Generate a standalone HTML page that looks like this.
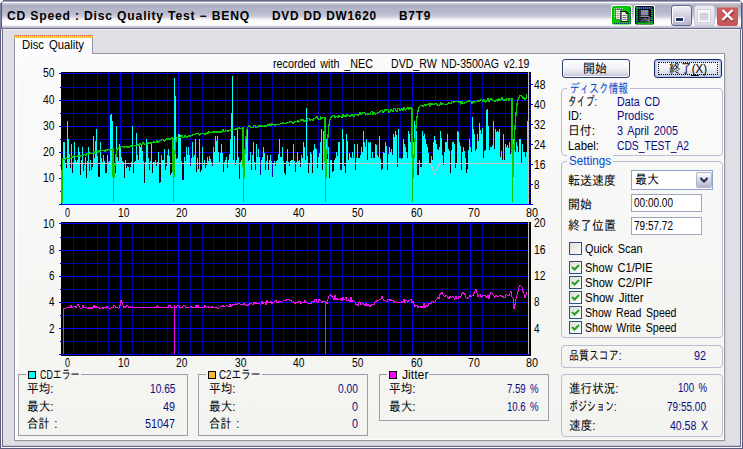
<!DOCTYPE html><html><head><meta charset="utf-8"><title>CD Speed : Disc Quality Test</title><style>
html,body{margin:0;padding:0}
body{width:743px;height:449px;position:relative;overflow:hidden;background:#e0dfe6;font-family:"Liberation Sans","IPAGothic",sans-serif;font-size:12px}
div,span,svg{position:absolute;box-sizing:border-box}
.t{word-spacing:2px;white-space:nowrap;line-height:20px;height:20px;transform-origin:0 50%;display:block}
#tb{left:0;top:0;width:743px;height:29px;background:linear-gradient(#6a6a88 0,#6a6a88 1px,#9c9cb6 1px,#9c9cb6 2px,#fcfcff 2px,#fcfcff 3px,#d2d2e0 3px,#c0c0d2 4px,#b4b4c8 5px,#b4b4c8 6px,#a6acb4 6px,#a6acb4 7px,#b4b4c8 7px,#b6b6ca 11px,#bebed2 14px,#cacadb 16px,#dcdce6 18px,#f4f4f6 19px,#fdfdfd 22px,#fff 25px,#e0e0ea 26px,#c0c0d4 27px,#b4b4ca 28px,#6c6c8c 28px,#6c6c8c 29px)}
#bl0{left:0;top:29px;width:1px;height:420px;background:#5c5c7c}
#bl1{left:1px;top:29px;width:1px;height:419px;background:#f4f4fa}
#bl2{left:2px;top:29px;width:1px;height:418px;background:#6c6c8c}
#br0{left:742px;top:29px;width:1px;height:420px;background:#5c5c7c}
#br1{left:741px;top:29px;width:1px;height:419px;background:#f4f4fa}
#br2{left:740px;top:29px;width:1px;height:418px;background:#6c6c8c}
#bb0{left:0;top:448px;width:743px;height:1px;background:#5c5c7c}
#bb1{left:1px;top:447px;width:741px;height:1px;background:#f4f4fa}
#bb2{left:2px;top:446px;width:739px;height:1px;background:#6c6c8c}
#bb3{left:3px;top:445px;width:737px;height:1px;background:#c4c4d4}
.cnr{width:4px;height:4px;top:0;background:#fff}
#tab{left:14px;top:35px;width:79px;height:19px;background:#fcfcfe;border:1px solid #9496a4;border-bottom:none;border-top:none}
#tabtop{left:14px;top:35px;width:79px;height:3px;background:#ffc73c;border-radius:2px 2px 0 0;border-top:1px dotted #e0503c}
#panel{left:14px;top:53px;width:711px;height:388px;background:#fcfcfe;border:1px solid #9496a4;box-shadow:1px 1px 0 #d4d4d0,2px 2px 0 #dcdcda}
#page{left:18px;top:56px;width:705px;height:383px;background:linear-gradient(#fafafa,#f3f3ef)}
.gb{border:1px solid #bcbcd4;border-radius:4px}
.gs{border:1px solid #9c9cac}
.cap{background:#f6f6f3;height:12px}
.btn{border:1px solid #2c3c6c;border-radius:3px;background:linear-gradient(#fefefe 0,#f4f4f8 45%,#dcdce8 80%,#b8b8d0 100%);box-shadow:inset 0 0 0 1px #fff}
.inp{background:#fff;border:1px solid #a0a4c0}
.cb{width:13px;height:13px;border:1px solid #2c5088;background:linear-gradient(135deg,#dcdcd8,#fff)}
.sq{width:8px;height:8px;border:1px solid #000}
.ls{letter-spacing:0.8px;word-spacing:0}
.tl{top:3px;width:1px;height:26px}
#hl{left:3px;top:29px;width:737px;height:1px;background:#f0f0f5}

</style></head><body>
<div id="tb"></div>
<svg style="left:0;top:0" width="4" height="4" shape-rendering="crispEdges"><path d="M0 0h3v1h-3zM0 1h2v1h-2zM0 2h1v1h-1z" fill="#fff"/><path d="M2 1h1v1h-1zM1 2h1v1h-1z" fill="#6a6a88"/></svg>
<svg style="left:739px;top:0" width="4" height="4" shape-rendering="crispEdges"><path d="M1 0h3v1h-3zM2 1h2v1h-2zM3 2h1v1h-1z" fill="#fff"/><path d="M1 1h1v1h-1zM2 2h1v1h-1z" fill="#6a6a88"/></svg>
<div class="tl" style="left:0;background:#8484a4"></div><div class="tl" style="left:1px;background:#5a5a7a"></div><div class="tl" style="left:742px;background:#8484a4"></div><div class="tl" style="left:741px;background:#5a5a7a"></div><div id="hl"></div>
<div id="bl0"></div><div id="bl1"></div><div id="bl2"></div>
<div id="br0"></div><div id="br1"></div><div id="br2"></div>
<div id="bb3"></div><div id="bb2"></div><div id="bb1"></div><div id="bb0"></div>
<!-- title bar icons -->
<svg style="left:611px;top:5px" width="21" height="21" viewBox="0 0 21 21">
 <rect x="0" y="0" width="21" height="20.5" rx="2.5" fill="#fff"/>
 <rect x="1" y="1" width="19" height="18.5" rx="1.5" fill="#00c400"/>
 <path d="M3 18.5H19.5M19.5 3V18.5" fill="none" stroke="#102878" stroke-width="1" stroke-dasharray="1 1"/>
 <path d="M3 3.5h10M3.5 3v9" fill="none" stroke="#b8e0a8" stroke-width="1" stroke-dasharray="1 1"/>
 <rect x="4.5" y="4.5" width="5" height="10" fill="#f0ecd0" stroke="#506080" stroke-width="0.8"/>
 <path d="M5.5 6.5h3M5.5 8.5h3M5.5 10.5h3M5.5 12.5h3" stroke="#9098a8" stroke-width="0.9"/>
 <path d="M10 6.5h5l2 2v8h-7z" fill="#f4f0dc" stroke="#181818" stroke-width="1.1"/>
 <path d="M15 6.5v2h2" fill="none" stroke="#181818" stroke-width="1"/>
 <path d="M11.5 10.5h4M11.5 12.5h4M11.5 14.5h4" stroke="#6878a0" stroke-width="1"/>
</svg>
<svg style="left:634px;top:5px" width="21" height="21" viewBox="0 0 21 21">
 <rect x="0" y="0" width="21" height="20.5" rx="2.5" fill="#fff"/>
 <rect x="1" y="1" width="19" height="18.5" rx="1.5" fill="#060806"/>
 <rect x="3" y="3" width="15" height="14.5" fill="none" stroke="#00c000" stroke-width="2" stroke-dasharray="1 1"/>
 <rect x="3" y="3" width="15" height="14.5" fill="none" stroke="#1040a0" stroke-width="2" stroke-dasharray="1 1" stroke-dashoffset="1" opacity=".8"/>
 <rect x="4" y="4" width="13" height="12.5" fill="#060806"/>
 <path d="M4 18.5h15" stroke="#00c000" stroke-width="1.5"/>
 <rect x="7" y="5" width="7.5" height="5.5" fill="#8888a8"/>
 <path d="M6 5v11h4" fill="none" stroke="#505068" stroke-width="1"/>
 <path d="M6.5 11.5h9" stroke="#9090a8" stroke-width="1"/>
 <rect x="7.500" y="13" width="5" height="3.500" fill="#48485c"/>
 <path d="M11 13l6 4M12 17l5-4M15 12v6" stroke="#9898b0" stroke-width="0.9"/>
</svg>
<!-- min -->
<div style="left:671px;top:5px;width:21px;height:21px;border:1px solid #5c6488;border-radius:3px;background:linear-gradient(#f0f0f8,#d4d4e4 45%,#b4b4cc);box-shadow:inset 1px 1px 0 #fff"></div>
<div style="left:675px;top:17px;width:9px;height:5px;background:#fff"></div>
<div style="left:676px;top:18px;width:7px;height:3px;background:#1c2c5c"></div>
<!-- max (disabled) -->
<div style="left:694px;top:5px;width:21px;height:21px;border:1px solid #c8c8d8;border-radius:3px;background:linear-gradient(#ececf2,#dcdce6)"></div>
<div style="left:698px;top:10px;width:12px;height:12px;border:1px solid #fafafc;border-top-width:2px;background:#d2d2de;box-shadow:0 0 0 1px #d0d0dc,inset 0 0 0 1px #ececf2"></div>
<!-- close -->
<div style="left:717px;top:5px;width:21px;height:21px;border-radius:3px;background:linear-gradient(#c0b8b4 0,#c0b8b4 2px,#cc5a5e 3px,#c8565a 100%)"></div>
<svg style="left:717px;top:4px" width="21" height="21" viewBox="0 0 21 21"><path d="M5.5 6.5l10 10M15.5 6.5l-10 10" stroke="#5a2020" stroke-width="3" opacity=".5" transform="translate(.7 .7)"/><path d="M5.5 6l10 10M15.5 6l-10 10" stroke="#fff" stroke-width="2.4"/></svg>

<!-- tab + panel -->
<div id="panel"></div>
<div id="page"></div>
<div id="tab"></div><div id="tabtop"></div>

<svg style="left:0;top:0" width="743" height="449" viewBox="0 0 743 449"><g shape-rendering="crispEdges"><rect x="61" y="72" width="470" height="133" fill="#000"/><rect x="73" y="72" width="1" height="133" fill="#0000a4"/><rect x="85" y="72" width="1" height="133" fill="#0000a4"/><rect x="97" y="72" width="1" height="133" fill="#0000a4"/><rect x="108" y="72" width="1" height="133" fill="#0000a4"/><rect x="120" y="72" width="1" height="133" fill="#0000e8"/><rect x="132" y="72" width="1" height="133" fill="#0000a4"/><rect x="143" y="72" width="1" height="133" fill="#0000a4"/><rect x="155" y="72" width="1" height="133" fill="#0000a4"/><rect x="167" y="72" width="1" height="133" fill="#0000a4"/><rect x="178" y="72" width="1" height="133" fill="#0000e8"/><rect x="190" y="72" width="1" height="133" fill="#0000a4"/><rect x="202" y="72" width="1" height="133" fill="#0000a4"/><rect x="213" y="72" width="1" height="133" fill="#0000a4"/><rect x="225" y="72" width="1" height="133" fill="#0000a4"/><rect x="237" y="72" width="1" height="133" fill="#0000e8"/><rect x="248" y="72" width="1" height="133" fill="#0000a4"/><rect x="260" y="72" width="1" height="133" fill="#0000a4"/><rect x="272" y="72" width="1" height="133" fill="#0000a4"/><rect x="283" y="72" width="1" height="133" fill="#0000a4"/><rect x="295" y="72" width="1" height="133" fill="#0000e8"/><rect x="307" y="72" width="1" height="133" fill="#0000a4"/><rect x="318" y="72" width="1" height="133" fill="#0000a4"/><rect x="330" y="72" width="1" height="133" fill="#0000a4"/><rect x="342" y="72" width="1" height="133" fill="#0000a4"/><rect x="353" y="72" width="1" height="133" fill="#0000e8"/><rect x="365" y="72" width="1" height="133" fill="#0000a4"/><rect x="377" y="72" width="1" height="133" fill="#0000a4"/><rect x="388" y="72" width="1" height="133" fill="#0000a4"/><rect x="400" y="72" width="1" height="133" fill="#0000a4"/><rect x="412" y="72" width="1" height="133" fill="#0000e8"/><rect x="423" y="72" width="1" height="133" fill="#0000a4"/><rect x="435" y="72" width="1" height="133" fill="#0000a4"/><rect x="447" y="72" width="1" height="133" fill="#0000a4"/><rect x="458" y="72" width="1" height="133" fill="#0000a4"/><rect x="470" y="72" width="1" height="133" fill="#0000e8"/><rect x="482" y="72" width="1" height="133" fill="#0000a4"/><rect x="493" y="72" width="1" height="133" fill="#0000a4"/><rect x="505" y="72" width="1" height="133" fill="#0000a4"/><rect x="517" y="72" width="1" height="133" fill="#0000a4"/><rect x="60" y="87" width="470" height="1" fill="#0000a4"/><rect x="60" y="113" width="470" height="1" fill="#0000a4"/><rect x="60" y="139" width="470" height="1" fill="#0000a4"/><rect x="60" y="165" width="470" height="1" fill="#0000a4"/><rect x="60" y="191" width="470" height="1" fill="#0000a4"/><rect x="59" y="73" width="471" height="1" fill="#0000ff"/><rect x="59" y="100" width="471" height="1" fill="#0000ff"/><rect x="59" y="126" width="471" height="1" fill="#0000ff"/><rect x="59" y="152" width="471" height="1" fill="#0000ff"/><rect x="59" y="178" width="471" height="1" fill="#0000ff"/><rect x="59" y="204" width="471" height="1" fill="#0000ff"/><path d="M62 160h1V205h-1zM63 142h1V205h-1zM64 142h1V205h-1zM65 164h1V205h-1zM66 168h1V205h-1zM67 121h1V205h-1zM68 139h1V205h-1zM69 154h1V205h-1zM70 168h1V205h-1zM71 144h1V205h-1zM72 173h1V205h-1zM73 162h1V205h-1zM74 142h1V205h-1zM75 160h1V205h-1zM76 162h1V205h-1zM77 160h1V205h-1zM78 147h1V205h-1zM79 152h1V205h-1zM80 175h1V205h-1zM81 160h1V205h-1zM82 147h1V205h-1zM83 171h1V205h-1zM84 165h1V205h-1zM85 157h1V205h-1zM86 178h1V205h-1zM87 161h1V205h-1zM88 147h1V205h-1zM89 171h1V205h-1zM90 160h1V205h-1zM91 170h1V205h-1zM92 167h1V205h-1zM93 136h1V205h-1zM94 158h1V205h-1zM95 141h1V205h-1zM96 129h1V205h-1zM97 156h1V205h-1zM98 177h1V205h-1zM99 177h1V205h-1zM100 142h1V205h-1zM101 158h1V205h-1zM102 162h1V205h-1zM103 155h1V205h-1zM104 161h1V205h-1zM105 173h1V205h-1zM106 173h1V205h-1zM107 155h1V205h-1zM108 162h1V205h-1zM109 161h1V205h-1zM110 115h1V205h-1zM111 114h1V205h-1zM112 121h1V205h-1zM113 159h1V205h-1zM114 175h1V205h-1zM115 173h1V205h-1zM116 126h1V205h-1zM117 157h1V205h-1zM118 161h1V205h-1zM119 144h1V205h-1zM120 146h1V205h-1zM121 157h1V205h-1zM122 161h1V205h-1zM123 162h1V205h-1zM124 178h1V205h-1zM125 160h1V205h-1zM126 168h1V205h-1zM127 166h1V205h-1zM128 167h1V205h-1zM129 171h1V205h-1zM130 167h1V205h-1zM131 162h1V205h-1zM132 126h1V205h-1zM133 173h1V205h-1zM134 162h1V205h-1zM135 161h1V205h-1zM136 133h1V205h-1zM137 155h1V205h-1zM138 160h1V205h-1zM139 144h1V205h-1zM140 147h1V205h-1zM141 144h1V205h-1zM142 151h1V205h-1zM143 161h1V205h-1zM144 183h1V205h-1zM145 162h1V205h-1zM146 139h1V205h-1zM147 145h1V205h-1zM148 158h1V205h-1zM149 170h1V205h-1zM150 161h1V205h-1zM151 144h1V205h-1zM152 173h1V205h-1zM153 162h1V205h-1zM154 162h1V205h-1zM155 160h1V205h-1zM156 166h1V205h-1zM157 162h1V205h-1zM158 152h1V205h-1zM159 183h1V205h-1zM160 182h1V205h-1zM161 155h1V205h-1zM162 160h1V205h-1zM163 160h1V205h-1zM164 149h1V205h-1zM165 170h1V205h-1zM166 166h1V205h-1zM167 155h1V205h-1zM168 149h1V205h-1zM169 156h1V205h-1zM170 175h1V205h-1zM171 173h1V205h-1zM172 166h1V205h-1zM173 161h1V205h-1zM174 78h1V205h-1zM175 96h1V205h-1zM176 159h1V205h-1zM177 158h1V205h-1zM178 134h1V205h-1zM179 134h1V205h-1zM180 135h1V205h-1zM181 161h1V205h-1zM182 180h1V205h-1zM183 180h1V205h-1zM184 157h1V205h-1zM185 161h1V205h-1zM186 147h1V205h-1zM187 155h1V205h-1zM188 147h1V205h-1zM189 155h1V205h-1zM190 166h1V205h-1zM191 158h1V205h-1zM192 142h1V205h-1zM193 157h1V205h-1zM194 155h1V205h-1zM195 139h1V205h-1zM196 172h1V205h-1zM197 158h1V205h-1zM198 169h1V205h-1zM199 139h1V205h-1zM200 172h1V205h-1zM201 170h1V205h-1zM202 147h1V205h-1zM203 165h1V205h-1zM204 160h1V205h-1zM205 168h1V205h-1zM206 165h1V205h-1zM207 157h1V205h-1zM208 161h1V205h-1zM209 156h1V205h-1zM210 159h1V205h-1zM211 162h1V205h-1zM212 166h1V205h-1zM213 147h1V205h-1zM214 152h1V205h-1zM215 136h1V205h-1zM216 141h1V205h-1zM217 136h1V205h-1zM218 152h1V205h-1zM219 162h1V205h-1zM220 153h1V205h-1zM221 144h1V205h-1zM222 153h1V205h-1zM223 172h1V205h-1zM224 162h1V205h-1zM225 160h1V205h-1zM226 157h1V205h-1zM227 168h1V205h-1zM228 160h1V205h-1zM229 154h1V205h-1zM230 139h1V205h-1zM231 113h1V205h-1zM232 76h1V205h-1zM233 160h1V205h-1zM234 136h1V205h-1zM235 165h1V205h-1zM236 160h1V205h-1zM237 129h1V205h-1zM238 157h1V205h-1zM239 179h1V205h-1zM240 162h1V205h-1zM241 160h1V205h-1zM242 160h1V205h-1zM243 156h1V205h-1zM244 149h1V205h-1zM245 154h1V205h-1zM246 139h1V205h-1zM247 129h1V205h-1zM248 161h1V205h-1zM249 160h1V205h-1zM250 152h1V205h-1zM251 170h1V205h-1zM252 155h1V205h-1zM253 142h1V205h-1zM254 162h1V205h-1zM255 170h1V205h-1zM256 144h1V205h-1zM257 157h1V205h-1zM258 149h1V205h-1zM259 157h1V205h-1zM260 175h1V205h-1zM261 160h1V205h-1zM262 157h1V205h-1zM263 147h1V205h-1zM264 153h1V205h-1zM265 170h1V205h-1zM266 161h1V205h-1zM267 155h1V205h-1zM268 170h1V205h-1zM269 160h1V205h-1zM270 155h1V205h-1zM271 161h1V205h-1zM272 177h1V205h-1zM273 164h1V205h-1zM274 161h1V205h-1zM275 166h1V205h-1zM276 161h1V205h-1zM277 160h1V205h-1zM278 154h1V205h-1zM279 139h1V205h-1zM280 157h1V205h-1zM281 157h1V205h-1zM282 147h1V205h-1zM283 161h1V205h-1zM284 173h1V205h-1zM285 175h1V205h-1zM286 161h1V205h-1zM287 149h1V205h-1zM288 162h1V205h-1zM289 166h1V205h-1zM290 161h1V205h-1zM291 160h1V205h-1zM292 160h1V205h-1zM293 144h1V205h-1zM294 161h1V205h-1zM295 172h1V205h-1zM296 162h1V205h-1zM297 152h1V205h-1zM298 161h1V205h-1zM299 160h1V205h-1zM300 167h1V205h-1zM301 155h1V205h-1zM302 158h1V205h-1zM303 142h1V205h-1zM304 147h1V205h-1zM305 160h1V205h-1zM306 108h1V205h-1zM307 156h1V205h-1zM308 173h1V205h-1zM309 164h1V205h-1zM310 152h1V205h-1zM311 154h1V205h-1zM312 173h1V205h-1zM313 150h1V205h-1zM314 144h1V205h-1zM315 148h1V205h-1zM316 149h1V205h-1zM317 168h1V205h-1zM318 157h1V205h-1zM319 153h1V205h-1zM320 142h1V205h-1zM321 129h1V205h-1zM322 170h1V205h-1zM323 131h1V205h-1zM324 160h1V205h-1zM325 160h1V205h-1zM326 139h1V205h-1zM327 159h1V205h-1zM328 147h1V205h-1zM329 178h1V205h-1zM330 160h1V205h-1zM331 160h1V205h-1zM332 172h1V205h-1zM333 171h1V205h-1zM334 160h1V205h-1zM335 158h1V205h-1zM336 152h1V205h-1zM337 156h1V205h-1zM338 142h1V205h-1zM339 142h1V205h-1zM340 170h1V205h-1zM341 170h1V205h-1zM342 129h1V205h-1zM343 139h1V205h-1zM344 166h1V205h-1zM345 173h1V205h-1zM346 134h1V205h-1zM347 141h1V205h-1zM348 160h1V205h-1zM349 153h1V205h-1zM350 157h1V205h-1zM351 158h1V205h-1zM352 152h1V205h-1zM353 158h1V205h-1zM354 144h1V205h-1zM355 170h1V205h-1zM356 158h1V205h-1zM357 144h1V205h-1zM358 158h1V205h-1zM359 158h1V205h-1zM360 155h1V205h-1zM361 147h1V205h-1zM362 152h1V205h-1zM363 131h1V205h-1zM364 142h1V205h-1zM365 147h1V205h-1zM366 139h1V205h-1zM367 160h1V205h-1zM368 142h1V205h-1zM369 143h1V205h-1zM370 142h1V205h-1zM371 158h1V205h-1zM372 152h1V205h-1zM373 158h1V205h-1zM374 158h1V205h-1zM375 144h1V205h-1zM376 145h1V205h-1zM377 155h1V205h-1zM378 157h1V205h-1zM379 136h1V205h-1zM380 159h1V205h-1zM381 170h1V205h-1zM382 169h1V205h-1zM383 152h1V205h-1zM384 153h1V205h-1zM385 142h1V205h-1zM386 146h1V205h-1zM387 170h1V205h-1zM388 154h1V205h-1zM389 147h1V205h-1zM390 152h1V205h-1zM391 149h1V205h-1zM392 155h1V205h-1zM393 134h1V205h-1zM394 137h1V205h-1zM395 131h1V205h-1zM396 135h1V205h-1zM397 167h1V205h-1zM398 129h1V205h-1zM399 158h1V205h-1zM400 158h1V205h-1zM401 159h1V205h-1zM402 158h1V205h-1zM403 139h1V205h-1zM404 144h1V205h-1zM405 147h1V205h-1zM406 152h1V205h-1zM407 158h1V205h-1zM408 131h1V205h-1zM409 134h1V205h-1zM410 142h1V205h-1zM411 153h1V205h-1zM412 156h1V205h-1zM413 142h1V205h-1zM414 121h1V205h-1zM415 131h1V205h-1zM416 131h1V205h-1zM417 175h1V205h-1zM418 175h1V205h-1zM419 160h1V205h-1zM420 167h1V205h-1zM421 167h1V205h-1zM422 131h1V205h-1zM423 136h1V205h-1zM424 134h1V205h-1zM425 139h1V205h-1zM426 144h1V205h-1zM427 147h1V205h-1zM428 153h1V205h-1zM429 164h1V205h-1zM430 163h1V205h-1zM431 156h1V205h-1zM432 160h1V205h-1zM433 142h1V205h-1zM434 136h1V205h-1zM435 140h1V205h-1zM436 144h1V205h-1zM437 149h1V205h-1zM438 150h1V205h-1zM439 147h1V205h-1zM440 131h1V205h-1zM441 138h1V205h-1zM442 155h1V205h-1zM443 165h1V205h-1zM444 152h1V205h-1zM445 142h1V205h-1zM446 142h1V205h-1zM447 134h1V205h-1zM448 149h1V205h-1zM449 151h1V205h-1zM450 173h1V205h-1zM451 150h1V205h-1zM452 142h1V205h-1zM453 142h1V205h-1zM454 144h1V205h-1zM455 168h1V205h-1zM456 164h1V205h-1zM457 131h1V205h-1zM458 132h1V205h-1zM459 142h1V205h-1zM460 146h1V205h-1zM461 170h1V205h-1zM462 152h1V205h-1zM463 147h1V205h-1zM464 151h1V205h-1zM465 158h1V205h-1zM466 173h1V205h-1zM467 169h1V205h-1zM468 150h1V205h-1zM469 139h1V205h-1zM470 147h1V205h-1zM471 152h1V205h-1zM472 117h1V205h-1zM473 129h1V205h-1zM474 134h1V205h-1zM475 151h1V205h-1zM476 149h1V205h-1zM477 134h1V205h-1zM478 141h1V205h-1zM479 123h1V205h-1zM480 130h1V205h-1zM481 134h1V205h-1zM482 128h1V205h-1zM483 158h1V205h-1zM484 151h1V205h-1zM485 150h1V205h-1zM486 110h1V205h-1zM487 109h1V205h-1zM488 126h1V205h-1zM489 150h1V205h-1zM490 147h1V205h-1zM491 147h1V205h-1zM492 145h1V205h-1zM493 121h1V205h-1zM494 149h1V205h-1zM495 129h1V205h-1zM496 132h1V205h-1zM497 131h1V205h-1zM498 132h1V205h-1zM499 129h1V205h-1zM500 157h1V205h-1zM501 151h1V205h-1zM502 160h1V205h-1zM503 134h1V205h-1zM504 160h1V205h-1zM505 144h1V205h-1zM506 147h1V205h-1zM507 145h1V205h-1zM508 148h1V205h-1zM509 142h1V205h-1zM510 154h1V205h-1zM511 150h1V205h-1zM512 151h1V205h-1zM513 139h1V205h-1zM514 146h1V205h-1zM515 152h1V205h-1zM516 142h1V205h-1zM517 146h1V205h-1zM518 152h1V205h-1zM519 139h1V205h-1zM520 139h1V205h-1zM521 164h1V205h-1zM522 144h1V205h-1zM523 152h1V205h-1zM524 152h1V205h-1zM525 157h1V205h-1zM526 152h1V205h-1zM527 121h1V205h-1z" fill="#00ffff"/></g><polyline points="65.0,163.5 430.5,163.5 434.5,174.0 439.5,163.5 522.0,163.5" fill="none" stroke="#c8c8c8" stroke-width="1" stroke-linejoin="round" shape-rendering="crispEdges"/><polyline points="62.0,203.0 62.0,175.0 62.5,161.0 63.0,158.7 64.0,159.7 65.0,159.4 66.0,158.0 67.0,158.4 68.0,158.8 69.0,158.0 70.0,158.8 71.0,158.1 72.0,156.3 73.0,157.7 74.0,155.9 75.0,156.7 76.0,156.5 77.0,156.8 78.0,155.4 79.0,155.2 80.0,156.6 81.0,155.4 82.0,155.8 83.0,155.5 84.0,154.7 85.0,154.5 86.0,155.3 87.0,153.5 88.0,153.2 89.0,154.6 90.0,152.8 91.0,153.8 92.0,153.0 93.0,153.8 94.0,151.5 95.0,153.3 96.0,151.1 97.0,151.3 98.0,152.3 99.0,150.5 100.0,151.2 101.0,150.0 102.0,150.8 103.0,150.6 104.0,151.0 105.0,151.2 106.0,149.9 107.0,150.7 108.0,149.5 109.0,149.4 110.0,150.2 111.0,149.7 112.0,149.0 113.0,148.8 113.3,201.0 114.0,172.0 115.0,165.3 116.0,155.2 117.0,149.7 118.0,148.1 119.0,147.4 120.0,147.8 121.0,146.7 122.0,146.5 123.0,146.7 124.0,147.1 125.0,146.4 126.0,146.8 127.0,147.6 128.0,146.4 129.0,147.3 130.0,146.1 131.0,145.9 132.0,146.4 133.0,145.6 134.0,146.0 135.0,145.2 136.0,145.7 137.0,145.5 138.0,144.7 139.0,145.2 140.0,143.8 141.0,144.2 142.0,145.0 143.0,142.9 144.0,143.7 145.0,144.1 146.0,144.3 147.0,144.2 148.0,142.4 149.0,143.8 150.0,142.7 151.0,143.1 152.0,142.9 153.0,142.7 154.0,141.0 155.0,142.8 156.0,142.6 157.0,140.9 158.0,142.3 159.0,141.7 160.0,140.9 161.0,140.8 162.0,139.6 163.0,139.4 164.0,140.2 165.0,141.1 166.0,139.9 167.0,138.7 168.0,139.6 169.0,138.4 170.0,139.2 171.0,138.4 172.0,137.9 173.0,138.7 173.3,201.0 174.0,171.3 175.0,151.5 176.0,140.7 177.0,137.7 178.0,137.5 179.0,137.4 180.0,137.2 181.0,136.1 182.0,135.9 183.0,137.4 184.0,137.2 185.0,135.5 186.0,136.3 187.0,137.2 188.0,136.6 189.0,135.9 190.0,136.3 191.0,135.6 192.0,136.0 193.0,134.7 194.0,134.1 195.0,135.0 196.0,133.8 197.0,133.7 198.0,133.5 199.0,135.0 200.0,134.8 201.0,133.1 202.0,133.3 203.0,133.8 204.0,133.6 205.0,134.1 206.0,133.3 207.0,132.6 208.0,134.0 209.0,131.9 210.0,132.8 211.0,132.6 212.0,132.5 213.0,131.7 214.0,132.2 215.0,132.0 216.0,131.9 217.0,132.3 218.0,131.6 219.0,132.4 220.0,131.9 221.0,132.1 222.0,131.6 223.0,129.8 224.0,131.3 225.0,131.1 226.0,130.4 227.0,130.2 228.0,131.1 229.0,130.9 230.0,130.8 231.0,129.0 232.0,129.5 233.0,129.3 234.0,129.2 235.0,129.6 236.0,128.9 237.0,129.3 238.0,128.6 239.0,127.4 240.0,128.3 241.0,128.7 242.0,128.0 243.0,127.8 243.3,201.0 244.0,172.0 245.0,151.1 246.0,136.9 247.0,129.1 248.0,127.0 249.0,125.9 250.0,126.8 251.0,127.3 252.0,127.2 253.0,127.5 254.0,125.8 255.0,125.3 256.0,127.2 257.0,127.2 258.0,126.1 259.0,126.0 260.0,125.9 261.0,126.8 262.0,125.7 263.0,126.2 264.0,126.5 265.0,125.4 266.0,126.3 267.0,125.2 268.0,124.1 269.0,125.6 270.0,123.9 271.0,125.8 272.0,123.8 273.0,124.7 274.0,124.6 275.0,125.5 276.0,124.4 277.0,124.3 278.0,124.8 279.0,124.7 280.0,124.0 281.0,123.2 282.0,123.7 283.0,122.9 284.0,123.4 285.0,123.2 286.0,123.7 287.0,122.9 288.0,122.8 289.0,122.6 290.0,121.5 291.0,121.3 292.0,122.8 293.0,123.0 294.0,122.9 295.0,121.1 296.0,121.6 297.0,122.0 298.0,120.7 299.0,122.1 300.0,121.0 301.0,119.9 302.0,120.7 303.0,119.6 304.0,121.9 305.0,120.2 306.0,121.6 307.0,121.4 308.0,118.3 309.0,118.1 310.0,120.4 311.0,119.3 312.0,119.2 313.0,120.5 314.0,118.0 315.0,118.7 316.0,117.7 317.0,116.9 318.0,118.3 319.0,119.6 320.0,119.5 321.0,116.9 322.0,118.6 323.0,117.5 324.0,117.5 325.0,117.5 325.3,201.0 326.0,172.0 327.0,151.7 328.0,135.7 329.0,124.9 330.0,119.1 331.0,117.5 332.0,116.5 333.0,115.8 334.0,115.7 335.0,117.9 336.0,116.0 337.0,116.8 338.0,117.6 339.0,115.7 340.0,116.5 341.0,116.4 342.0,117.7 343.0,114.6 344.0,116.9 345.0,115.9 346.0,116.7 347.0,114.8 348.0,115.6 349.0,115.4 350.0,116.2 351.0,115.2 352.0,115.1 353.0,115.0 354.0,116.4 355.0,114.8 356.0,114.7 357.0,114.5 358.0,115.3 359.0,114.3 360.0,112.7 361.0,114.1 362.0,113.1 363.0,113.0 364.0,112.2 365.0,113.6 366.0,114.4 367.0,114.3 368.0,113.3 369.0,114.1 370.0,114.6 371.0,112.0 372.0,111.3 373.0,114.2 374.0,112.6 375.0,114.0 376.0,113.9 377.0,113.2 378.0,112.1 379.0,112.9 380.0,111.9 381.0,110.9 382.0,110.2 383.0,112.5 384.0,111.5 385.0,109.8 386.0,110.3 387.0,109.6 388.0,109.5 389.0,112.4 390.0,111.7 391.0,109.8 392.0,110.6 393.0,111.3 394.0,108.8 395.0,108.7 396.0,110.1 397.0,111.5 398.0,108.4 399.0,108.9 400.0,110.5 401.0,109.5 402.0,108.5 403.0,110.8 404.0,107.7 405.0,110.0 406.0,109.9 407.0,108.8 408.0,107.2 409.0,109.5 410.0,107.0 411.0,108.2 412.0,108.0 412.3,201.0 413.0,172.0 414.0,156.4 415.0,139.8 416.0,126.7 417.0,117.0 418.0,110.5 419.0,107.0 420.0,106.0 421.0,105.0 422.0,105.8 423.0,106.7 424.0,105.7 425.0,104.1 426.0,105.5 427.0,104.5 428.0,104.4 429.0,103.8 430.0,106.1 431.0,103.6 432.0,104.1 433.0,104.0 434.0,104.8 435.0,103.9 436.0,103.2 437.0,104.6 438.0,106.0 439.0,105.3 440.0,104.4 441.0,102.8 442.0,104.2 443.0,103.2 444.0,104.0 445.0,104.8 446.0,104.8 447.0,104.7 448.0,103.7 449.0,102.1 450.0,103.5 451.0,103.4 452.0,101.9 453.0,101.8 454.0,102.3 455.0,101.6 456.0,101.5 457.0,101.5 458.0,101.4 459.0,102.8 460.0,101.2 461.0,104.1 462.0,101.0 463.0,103.4 464.0,103.3 465.0,102.3 466.0,102.2 467.0,101.2 468.0,102.0 469.0,100.5 470.0,101.9 471.0,101.8 472.0,103.2 473.0,101.6 474.0,102.4 475.0,101.5 476.0,101.4 477.0,101.3 478.0,100.3 479.0,101.1 480.0,101.1 481.0,99.5 482.0,100.0 483.0,101.7 484.0,99.2 485.0,102.1 486.0,102.1 487.0,100.5 488.0,98.9 489.0,101.2 490.0,99.3 491.0,98.6 492.0,100.1 493.0,100.0 494.0,100.8 495.0,101.3 496.0,100.6 497.0,99.7 498.0,101.1 499.0,98.0 500.0,100.3 501.0,99.3 502.0,97.7 503.0,99.2 504.0,100.6 505.0,99.0 506.0,100.4 507.0,98.8 508.0,98.7 509.0,100.2 510.0,98.6 511.0,98.5 512.0,98.4 512.3,201.0 513.0,171.3 514.0,146.9 515.0,127.8 516.0,113.6 517.0,104.2 518.0,99.0 519.0,97.6 520.0,95.1 521.0,96.0 522.0,95.9 523.0,98.7 524.0,97.2 525.0,99.5 526.0,98.5 527.0,94.6" fill="none" stroke="#08c808" stroke-width="1.3" stroke-linejoin="round" shape-rendering="crispEdges"/><g shape-rendering="crispEdges"><rect x="528" y="72" width="1" height="133" fill="#c0c0c0"/><rect x="59" y="204" width="470" height="1" fill="#0000ff"/><rect x="529" y="204" width="2" height="1" fill="#0000ff"/><rect x="529" y="202" width="2" height="1" fill="#0000ff"/><rect x="529" y="199" width="2" height="1" fill="#0000ff"/><rect x="529" y="197" width="2" height="1" fill="#0000ff"/><rect x="529" y="194" width="2" height="1" fill="#0000ff"/><rect x="529" y="192" width="2" height="1" fill="#0000ff"/><rect x="529" y="189" width="2" height="1" fill="#0000ff"/><rect x="529" y="187" width="2" height="1" fill="#0000ff"/><rect x="529" y="184" width="2" height="1" fill="#0000ff"/><rect x="529" y="182" width="2" height="1" fill="#0000ff"/><rect x="529" y="179" width="2" height="1" fill="#0000ff"/><rect x="529" y="177" width="2" height="1" fill="#0000ff"/><rect x="529" y="174" width="2" height="1" fill="#0000ff"/><rect x="529" y="172" width="2" height="1" fill="#0000ff"/><rect x="529" y="169" width="2" height="1" fill="#0000ff"/><rect x="529" y="167" width="2" height="1" fill="#0000ff"/><rect x="529" y="164" width="2" height="1" fill="#0000ff"/><rect x="529" y="162" width="2" height="1" fill="#0000ff"/><rect x="529" y="159" width="2" height="1" fill="#0000ff"/><rect x="529" y="157" width="2" height="1" fill="#0000ff"/><rect x="529" y="154" width="2" height="1" fill="#0000ff"/><rect x="529" y="152" width="2" height="1" fill="#0000ff"/><rect x="529" y="149" width="2" height="1" fill="#0000ff"/><rect x="529" y="147" width="2" height="1" fill="#0000ff"/><rect x="529" y="144" width="2" height="1" fill="#0000ff"/><rect x="529" y="142" width="2" height="1" fill="#0000ff"/><rect x="529" y="139" width="2" height="1" fill="#0000ff"/><rect x="529" y="137" width="2" height="1" fill="#0000ff"/><rect x="529" y="134" width="2" height="1" fill="#0000ff"/><rect x="529" y="132" width="2" height="1" fill="#0000ff"/><rect x="529" y="129" width="2" height="1" fill="#0000ff"/><rect x="529" y="127" width="2" height="1" fill="#0000ff"/><rect x="529" y="124" width="2" height="1" fill="#0000ff"/><rect x="529" y="122" width="2" height="1" fill="#0000ff"/><rect x="529" y="119" width="2" height="1" fill="#0000ff"/><rect x="529" y="117" width="2" height="1" fill="#0000ff"/><rect x="529" y="114" width="2" height="1" fill="#0000ff"/><rect x="529" y="112" width="2" height="1" fill="#0000ff"/><rect x="529" y="109" width="2" height="1" fill="#0000ff"/><rect x="529" y="107" width="2" height="1" fill="#0000ff"/><rect x="529" y="104" width="2" height="1" fill="#0000ff"/><rect x="529" y="102" width="2" height="1" fill="#0000ff"/><rect x="529" y="99" width="2" height="1" fill="#0000ff"/><rect x="529" y="97" width="2" height="1" fill="#0000ff"/><rect x="529" y="94" width="2" height="1" fill="#0000ff"/><rect x="529" y="92" width="2" height="1" fill="#0000ff"/><rect x="529" y="89" width="2" height="1" fill="#0000ff"/><rect x="529" y="87" width="2" height="1" fill="#0000ff"/><rect x="529" y="84" width="2" height="1" fill="#0000ff"/><rect x="529" y="82" width="2" height="1" fill="#0000ff"/><rect x="529" y="79" width="2" height="1" fill="#0000ff"/><rect x="529" y="77" width="2" height="1" fill="#0000ff"/><rect x="529" y="74" width="2" height="1" fill="#0000ff"/><rect x="529" y="84" width="4" height="1" fill="#0000ff"/><rect x="529" y="104" width="4" height="1" fill="#0000ff"/><rect x="529" y="124" width="4" height="1" fill="#0000ff"/><rect x="529" y="144" width="4" height="1" fill="#0000ff"/><rect x="529" y="164" width="4" height="1" fill="#0000ff"/><rect x="529" y="184" width="4" height="1" fill="#0000ff"/><rect x="529" y="204" width="4" height="1" fill="#0000ff"/></g></svg>
<svg style="left:0;top:0" width="743" height="449" viewBox="0 0 743 449"><g shape-rendering="crispEdges"><rect x="61" y="222" width="470" height="134" fill="#000"/><rect x="73" y="222" width="1" height="133" fill="#0000a4"/><rect x="85" y="222" width="1" height="133" fill="#0000a4"/><rect x="97" y="222" width="1" height="133" fill="#0000a4"/><rect x="108" y="222" width="1" height="133" fill="#0000a4"/><rect x="120" y="222" width="1" height="133" fill="#0000e8"/><rect x="132" y="222" width="1" height="133" fill="#0000a4"/><rect x="143" y="222" width="1" height="133" fill="#0000a4"/><rect x="155" y="222" width="1" height="133" fill="#0000a4"/><rect x="167" y="222" width="1" height="133" fill="#0000a4"/><rect x="178" y="222" width="1" height="133" fill="#0000e8"/><rect x="190" y="222" width="1" height="133" fill="#0000a4"/><rect x="202" y="222" width="1" height="133" fill="#0000a4"/><rect x="213" y="222" width="1" height="133" fill="#0000a4"/><rect x="225" y="222" width="1" height="133" fill="#0000a4"/><rect x="237" y="222" width="1" height="133" fill="#0000e8"/><rect x="248" y="222" width="1" height="133" fill="#0000a4"/><rect x="260" y="222" width="1" height="133" fill="#0000a4"/><rect x="272" y="222" width="1" height="133" fill="#0000a4"/><rect x="283" y="222" width="1" height="133" fill="#0000a4"/><rect x="295" y="222" width="1" height="133" fill="#0000e8"/><rect x="307" y="222" width="1" height="133" fill="#0000a4"/><rect x="318" y="222" width="1" height="133" fill="#0000a4"/><rect x="330" y="222" width="1" height="133" fill="#0000a4"/><rect x="342" y="222" width="1" height="133" fill="#0000a4"/><rect x="353" y="222" width="1" height="133" fill="#0000e8"/><rect x="365" y="222" width="1" height="133" fill="#0000a4"/><rect x="377" y="222" width="1" height="133" fill="#0000a4"/><rect x="388" y="222" width="1" height="133" fill="#0000a4"/><rect x="400" y="222" width="1" height="133" fill="#0000a4"/><rect x="412" y="222" width="1" height="133" fill="#0000e8"/><rect x="423" y="222" width="1" height="133" fill="#0000a4"/><rect x="435" y="222" width="1" height="133" fill="#0000a4"/><rect x="447" y="222" width="1" height="133" fill="#0000a4"/><rect x="458" y="222" width="1" height="133" fill="#0000a4"/><rect x="470" y="222" width="1" height="133" fill="#0000e8"/><rect x="482" y="222" width="1" height="133" fill="#0000a4"/><rect x="493" y="222" width="1" height="133" fill="#0000a4"/><rect x="505" y="222" width="1" height="133" fill="#0000a4"/><rect x="517" y="222" width="1" height="133" fill="#0000a4"/><rect x="60" y="237" width="470" height="1" fill="#0000a4"/><rect x="60" y="263" width="470" height="1" fill="#0000a4"/><rect x="60" y="289" width="470" height="1" fill="#0000a4"/><rect x="60" y="315" width="470" height="1" fill="#0000a4"/><rect x="60" y="341" width="470" height="1" fill="#0000a4"/><rect x="59" y="223" width="471" height="1" fill="#0000ff"/><rect x="59" y="250" width="471" height="1" fill="#0000ff"/><rect x="59" y="276" width="471" height="1" fill="#0000ff"/><rect x="59" y="302" width="471" height="1" fill="#0000ff"/><rect x="59" y="328" width="471" height="1" fill="#0000ff"/><rect x="59" y="354" width="471" height="1" fill="#0000ff"/></g><polyline points="63.0,354.0 63.0,308.0 64.0,308.0 65.0,308.3 66.0,308.0 67.0,307.8 68.0,308.1 69.0,307.8 70.0,307.8 71.0,305.5 72.0,308.3 73.0,306.8 74.0,306.6 75.0,306.0 76.0,308.0 77.0,306.3 78.0,304.5 79.0,306.2 80.0,308.3 81.0,308.2 82.0,307.9 83.0,305.6 84.0,307.9 85.0,307.9 86.0,306.7 87.0,308.2 88.0,308.3 89.0,307.7 90.0,308.2 91.0,307.8 92.0,308.3 93.0,307.8 94.0,305.4 95.0,307.8 96.0,305.7 97.0,307.8 98.0,307.8 99.0,307.8 100.0,308.3 101.0,307.9 102.0,307.8 103.0,308.2 104.0,307.8 105.0,307.8 106.0,308.2 107.0,306.6 108.0,308.0 109.0,308.1 110.0,308.0 111.0,308.0 112.0,306.8 113.0,308.2 114.0,305.6 115.0,305.7 116.0,308.2 117.0,306.7 118.0,308.3 119.0,308.1 120.0,305.6 121.0,300.5 122.0,302.4 123.0,305.1 124.0,307.6 125.0,306.5 126.0,307.4 127.0,305.5 128.0,305.8 129.0,307.7 130.0,307.6 131.0,306.3 132.0,307.2 133.0,307.6 134.0,307.2 135.0,307.5 136.0,307.4 137.0,307.2 138.0,307.6 139.0,307.6 140.0,307.7 141.0,307.4 142.0,307.7 143.0,307.5 144.0,307.7 145.0,307.6 146.0,307.5 147.0,307.2 148.0,307.8 149.0,307.6 150.0,307.6 151.0,307.5 152.0,307.3 153.0,307.2 154.0,307.5 155.0,307.6 156.0,307.6 157.0,305.7 158.0,306.2 159.0,307.7 160.0,307.5 161.0,307.4 162.0,307.3 163.0,307.7 164.0,307.7 165.0,307.5 166.0,307.3 167.0,307.7 168.0,307.6 169.0,305.5 170.0,305.6 171.0,307.6 172.0,307.4 173.0,307.8 174.5,307.5 174.5,330.0 174.0,330.0 174.0,354.0 174.0,330.0 174.5,330.0 174.5,307.5 174.0,304.8 175.0,307.2 176.0,307.5 177.0,306.3 178.0,305.1 179.0,306.1 180.0,307.6 181.0,307.6 182.0,307.7 183.0,305.7 184.0,305.4 185.0,306.0 186.0,307.4 187.0,307.5 188.0,307.7 189.0,307.7 190.0,307.3 191.0,305.8 192.0,307.6 193.0,307.4 194.0,307.7 195.0,307.8 196.0,305.4 197.0,307.7 198.0,305.2 199.0,307.8 200.0,307.5 201.0,307.4 202.0,307.7 203.0,307.2 204.0,307.5 205.0,305.2 206.0,307.2 207.0,307.3 208.0,306.3 209.0,307.5 210.0,307.7 211.0,307.8 212.0,306.3 213.0,307.5 214.0,307.6 215.0,307.6 216.0,307.6 217.0,306.9 218.0,308.4 219.0,308.1 220.0,307.0 221.0,305.9 222.0,306.7 223.0,305.2 224.0,306.5 225.0,307.2 226.0,306.2 227.0,304.8 228.0,305.7 229.0,307.2 230.0,304.5 231.0,306.6 232.0,305.5 233.0,304.5 234.0,304.9 235.0,303.8 236.0,304.3 237.0,304.4 238.0,303.6 239.0,303.6 240.0,303.9 241.0,304.6 242.0,304.1 243.0,304.5 244.0,303.4 245.0,304.7 246.0,305.3 247.0,305.2 248.0,304.8 249.0,305.2 250.0,303.4 251.0,303.1 252.0,304.2 253.0,304.5 254.0,302.5 255.0,303.5 256.0,302.5 257.0,303.3 258.0,304.1 259.0,303.6 260.0,304.2 261.0,303.9 262.0,301.4 263.0,303.4 264.0,302.6 265.0,302.2 266.0,304.5 267.0,299.9 268.0,302.8 269.0,302.2 270.0,302.7 271.0,301.3 272.0,303.5 273.0,302.2 274.0,301.9 275.0,301.1 276.0,300.5 277.0,302.8 278.0,302.8 279.0,301.3 280.0,301.5 281.0,302.1 282.0,302.1 283.0,301.3 284.0,299.9 285.0,301.0 286.0,300.3 287.0,299.6 288.0,298.9 289.0,299.4 290.0,301.2 291.0,300.4 292.0,302.0 293.0,302.1 294.0,301.9 295.0,303.4 296.0,302.7 297.0,302.2 298.0,303.1 299.0,301.4 300.0,301.1 301.0,304.1 302.0,302.4 303.0,302.6 304.0,302.9 305.0,300.6 306.0,302.1 307.0,302.3 308.0,303.0 309.0,303.5 310.0,303.8 311.0,303.6 312.0,301.5 313.0,301.7 314.0,302.3 315.0,299.5 316.0,299.5 317.0,302.3 318.0,302.9 319.0,299.4 320.0,301.1 321.0,300.9 322.0,303.0 323.0,301.1 324.0,301.9 325.5,302.0 325.5,335.0 325.0,335.0 325.0,354.0 325.0,335.0 325.5,335.0 325.5,302.0 325.0,303.9 326.0,302.0 327.0,303.8 328.0,299.0 329.0,296.2 330.0,295.2 331.0,294.7 332.0,296.5 333.0,298.1 334.0,300.0 335.0,295.4 336.0,299.6 337.0,298.0 338.0,299.5 339.0,299.2 340.0,300.0 341.0,298.3 342.0,301.2 343.0,297.1 344.0,299.8 345.0,298.8 346.0,297.5 347.0,300.9 348.0,300.3 349.0,299.7 350.0,301.9 351.0,297.5 352.0,301.5 353.0,299.9 354.0,300.7 355.0,301.9 356.0,305.1 357.0,304.0 358.0,306.2 359.0,302.2 360.0,301.6 361.0,304.7 362.0,304.0 363.0,303.2 364.0,304.6 365.0,305.9 366.0,303.2 367.0,306.0 368.0,303.7 369.0,305.6 370.0,307.1 371.0,305.2 372.0,304.7 373.0,304.2 374.0,305.3 375.0,302.2 376.0,301.4 377.0,300.6 378.0,300.6 379.0,299.9 380.0,299.3 381.0,299.5 382.0,295.7 383.0,298.7 384.0,301.0 385.0,299.7 386.0,301.0 387.0,301.5 388.0,298.9 389.0,299.2 390.0,301.3 391.0,299.6 392.0,300.8 393.0,300.4 394.0,302.7 395.0,300.9 396.0,301.8 397.0,302.6 398.0,302.3 399.0,302.5 400.0,302.4 401.0,303.0 402.0,301.3 403.0,302.4 404.0,299.4 405.0,303.3 406.0,300.0 407.0,301.1 408.0,302.4 409.0,300.0 410.0,300.1 411.0,298.9 412.0,302.7 413.0,301.4 414.0,303.7 415.0,306.5 416.0,305.4 417.0,305.6 418.0,307.5 419.0,306.7 420.0,306.4 421.0,308.0 422.0,305.9 423.0,308.3 424.0,303.5 425.0,307.7 426.0,306.6 427.0,305.6 428.0,306.3 429.0,302.9 430.0,303.6 431.0,304.2 432.0,301.1 433.0,301.4 434.0,303.2 435.0,301.8 436.0,300.0 437.0,299.1 438.0,297.0 439.0,298.9 440.0,294.3 441.0,293.6 442.0,291.9 443.0,294.8 444.0,296.2 445.0,296.8 446.0,295.6 447.0,296.1 448.0,297.5 449.0,298.8 450.0,295.9 451.0,297.6 452.0,297.2 453.0,296.3 454.0,297.8 455.0,299.4 456.0,296.2 457.0,299.1 458.0,298.7 459.0,296.5 460.0,298.2 461.0,296.0 462.0,293.5 463.0,291.7 464.0,293.6 465.0,294.5 466.0,297.9 467.0,298.7 468.0,297.6 469.0,297.2 470.0,294.9 471.0,297.2 472.0,295.9 473.0,295.7 474.0,293.5 475.0,290.8 476.0,288.7 477.0,292.8 478.0,296.8 479.0,295.0 480.0,293.8 481.0,296.7 482.0,297.2 483.0,295.6 484.0,295.7 485.0,294.9 486.0,296.6 487.0,298.0 488.0,295.5 489.0,298.6 490.0,294.5 491.0,291.8 492.0,293.2 493.0,295.0 494.0,295.8 495.0,297.4 496.0,295.2 497.0,297.1 498.0,296.0 499.0,296.1 500.0,295.1 501.0,295.0 502.0,296.6 503.0,296.6 504.0,297.9 505.0,297.5 506.0,294.6 507.0,295.2 508.0,295.0 509.0,296.0 510.0,293.0 511.0,290.7 512.0,297.3 513.0,298.2 514.0,309.0 515.0,304.6 516.0,298.6 517.0,294.7 518.0,291.6 519.0,286.9 520.0,285.6 521.0,286.1 522.0,287.2 523.0,291.5 524.0,293.9 525.0,298.3 526.0,294.8 527.0,292.0" fill="none" stroke="#f010f0" stroke-width="1" stroke-linejoin="round" shape-rendering="crispEdges"/><g shape-rendering="crispEdges"><rect x="528" y="222" width="1" height="133" fill="#c0c0c0"/><rect x="59" y="354" width="470" height="1" fill="#0000ff"/></g></svg>

<!-- buttons -->
<div class="btn" style="left:562px;top:59px;width:68px;height:19px"></div>
<div class="btn" style="left:654px;top:59px;width:68px;height:19px;border-color:#1c2c5c;box-shadow:inset 0 0 0 1px #b4c4f0,inset 0 0 0 2px #c8d4f4"></div>
<div style="left:658px;top:62px;width:60px;height:13px;border:1px dotted #000"></div>
<div style="left:691px;top:75px;width:8px;height:1px;background:#000"></div>

<!-- group: disc info -->
<div class="gb" style="left:561px;top:88px;width:162px;height:68px"></div>
<div class="cap" style="left:567px;top:82px;width:63px"></div>
<!-- group: settings -->
<div class="gb" style="left:561px;top:161px;width:162px;height:177px"></div>
<div class="cap" style="left:567px;top:155px;width:46px"></div>
<!-- combo -->
<div class="inp" style="left:631px;top:170px;width:82px;height:20px;border-color:#8ca4d4"></div>
<div style="left:696px;top:172px;width:16px;height:16px;border:1px solid #b0b4cc;border-radius:2px;background:linear-gradient(#fcfcfe,#d0d0e0 60%,#b8b8d0)"></div>
<svg style="left:696px;top:173px" width="16" height="14" viewBox="0 0 16 14"><path d="M4.5 5l3.5 3.5L11.500 5" fill="none" stroke="#1c2c4c" stroke-width="2"/></svg>
<!-- inputs -->
<div class="inp" style="left:631px;top:194px;width:71px;height:18px"></div>
<div class="inp" style="left:631px;top:217px;width:71px;height:18px"></div>
<!-- checkboxes -->
<div class="cb" style="left:569px;top:242px"></div>
<div class="cb" style="left:569px;top:261px"></div>
<div class="cb" style="left:569px;top:276px"></div>
<div class="cb" style="left:569px;top:291px"></div>
<div class="cb" style="left:569px;top:306px"></div>
<div class="cb" style="left:569px;top:321px"></div>
<svg style="left:569px;top:261px" width="13" height="73" viewBox="0 0 13 73"><g fill="none" stroke="#21a121" stroke-width="2"><path d="M3 6l2.5 2.5L10 4"/><path d="M3 21l2.5 2.5L10 19"/><path d="M3 36l2.5 2.5L10 34"/><path d="M3 51l2.5 2.5L10 49"/><path d="M3 66l2.5 2.5L10 64"/></g></svg>
<!-- group: score -->
<div class="gb" style="left:561px;top:345px;width:162px;height:23px"></div>
<!-- group: progress -->
<div class="gb" style="left:561px;top:374px;width:162px;height:63px"></div>

<!-- bottom groups -->
<div class="gs" style="left:18px;top:374px;width:170px;height:62px"></div>
<div class="cap" style="left:26px;top:368px;width:55px"></div>
<div class="sq" style="left:28px;top:371px;background:#00ffff"></div>
<div class="gs" style="left:198px;top:374px;width:170px;height:62px"></div>
<div class="cap" style="left:206px;top:368px;width:56px"></div>
<div class="sq" style="left:208px;top:371px;background:#ffb830"></div>
<div class="gs" style="left:379px;top:374px;width:170px;height:47px"></div>
<div class="cap" style="left:387px;top:368px;width:42px"></div>
<div class="sq" style="left:389px;top:371px;background:#ff00ff"></div>

<span class="t ls" style="left:7px;top:5.5px;font-size:12px;color:#000;font-weight:700;transform:scaleX(1.0118)">CD Speed : Disc Quality Test − BENQ</span>
<span class="t ls" style="left:272px;top:5.5px;font-size:12px;color:#000;font-weight:700;transform:scaleX(0.9865)">DVD DD DW1620</span>
<span class="t ls" style="left:399px;top:5.5px;font-size:12px;color:#000;font-weight:700;transform:scaleX(0.9832)">B7T9</span>
<span class="t" style="left:22px;top:34.5px;font-size:12px;color:#000;font-weight:400;transform:scaleX(0.9392)">Disc Quality</span>
<span class="t" style="left:273px;top:53.5px;font-size:12px;color:#000;font-weight:400;transform:scaleX(0.8977)">recorded with _NEC</span>
<span class="t" style="left:390.5px;top:53.5px;font-size:12px;color:#000;font-weight:400;transform:scaleX(0.8812)">DVD_RW ND-3500AG v2.19</span>
<span class="t" style="left:43px;top:63px;font-size:12px;color:#000;font-weight:400;transform:scaleX(0.8608)">50</span>
<span class="t" style="left:43px;top:89.5px;font-size:12px;color:#000;font-weight:400;transform:scaleX(0.8608)">40</span>
<span class="t" style="left:43px;top:115.5px;font-size:12px;color:#000;font-weight:400;transform:scaleX(0.8608)">30</span>
<span class="t" style="left:43px;top:142px;font-size:12px;color:#000;font-weight:400;transform:scaleX(0.8608)">20</span>
<span class="t" style="left:43px;top:168px;font-size:12px;color:#000;font-weight:400;transform:scaleX(0.8608)">10</span>
<span class="t" style="left:65px;top:203px;font-size:12px;color:#000;font-weight:400;transform:scaleX(0.7477)">0</span>
<span class="t" style="left:65px;top:353px;font-size:12px;color:#000;font-weight:400;transform:scaleX(0.7477)">0</span>
<span class="t" style="left:118.4px;top:203px;font-size:12px;color:#000;font-weight:400;transform:scaleX(0.8533)">10</span>
<span class="t" style="left:118.4px;top:353px;font-size:12px;color:#000;font-weight:400;transform:scaleX(0.8533)">10</span>
<span class="t" style="left:176px;top:203px;font-size:12px;color:#000;font-weight:400;transform:scaleX(0.8458)">20</span>
<span class="t" style="left:176px;top:353px;font-size:12px;color:#000;font-weight:400;transform:scaleX(0.8458)">20</span>
<span class="t" style="left:234.6px;top:203px;font-size:12px;color:#000;font-weight:400;transform:scaleX(0.8533)">30</span>
<span class="t" style="left:234.6px;top:353px;font-size:12px;color:#000;font-weight:400;transform:scaleX(0.8533)">30</span>
<span class="t" style="left:293.2px;top:203px;font-size:12px;color:#000;font-weight:400;transform:scaleX(0.8533)">40</span>
<span class="t" style="left:293.2px;top:353px;font-size:12px;color:#000;font-weight:400;transform:scaleX(0.8533)">40</span>
<span class="t" style="left:351.9px;top:203px;font-size:12px;color:#000;font-weight:400;transform:scaleX(0.8458)">50</span>
<span class="t" style="left:351.9px;top:353px;font-size:12px;color:#000;font-weight:400;transform:scaleX(0.8458)">50</span>
<span class="t" style="left:410.5px;top:203px;font-size:12px;color:#000;font-weight:400;transform:scaleX(0.8533)">60</span>
<span class="t" style="left:410.5px;top:353px;font-size:12px;color:#000;font-weight:400;transform:scaleX(0.8533)">60</span>
<span class="t" style="left:468px;top:203px;font-size:12px;color:#000;font-weight:400;transform:scaleX(0.8833)">70</span>
<span class="t" style="left:468px;top:353px;font-size:12px;color:#000;font-weight:400;transform:scaleX(0.8833)">70</span>
<span class="t" style="left:526px;top:203px;font-size:12px;color:#000;font-weight:400;transform:scaleX(0.8982)">80</span>
<span class="t" style="left:526px;top:353px;font-size:12px;color:#000;font-weight:400;transform:scaleX(0.8982)">80</span>
<span class="t" style="left:533.5px;top:74.5px;font-size:12px;color:#000;font-weight:400;transform:scaleX(0.8608)">48</span>
<span class="t" style="left:533.5px;top:94.5px;font-size:12px;color:#000;font-weight:400;transform:scaleX(0.8608)">40</span>
<span class="t" style="left:533.5px;top:114.5px;font-size:12px;color:#000;font-weight:400;transform:scaleX(0.8608)">32</span>
<span class="t" style="left:533.5px;top:134.5px;font-size:12px;color:#000;font-weight:400;transform:scaleX(0.8608)">24</span>
<span class="t" style="left:533.5px;top:154.5px;font-size:12px;color:#000;font-weight:400;transform:scaleX(0.8608)">16</span>
<span class="t" style="left:533.5px;top:174.5px;font-size:12px;color:#000;font-weight:400;transform:scaleX(0.8224)">8</span>
<span class="t" style="left:43px;top:214px;font-size:12px;color:#000;font-weight:400;transform:scaleX(0.8608)">10</span>
<span class="t" style="left:49px;top:240px;font-size:12px;color:#000;font-weight:400;transform:scaleX(0.8224)">8</span>
<span class="t" style="left:49px;top:266px;font-size:12px;color:#000;font-weight:400;transform:scaleX(0.8224)">6</span>
<span class="t" style="left:49px;top:292.3px;font-size:12px;color:#000;font-weight:400;transform:scaleX(0.8224)">4</span>
<span class="t" style="left:49px;top:318.5px;font-size:12px;color:#000;font-weight:400;transform:scaleX(0.8224)">2</span>
<span class="t" style="left:533.5px;top:213px;font-size:12px;color:#000;font-weight:400;transform:scaleX(0.8608)">20</span>
<span class="t" style="left:533.5px;top:240px;font-size:12px;color:#000;font-weight:400;transform:scaleX(0.8608)">16</span>
<span class="t" style="left:533.5px;top:266px;font-size:12px;color:#000;font-weight:400;transform:scaleX(0.8608)">12</span>
<span class="t" style="left:533.5px;top:292.3px;font-size:12px;color:#000;font-weight:400;transform:scaleX(0.8224)">8</span>
<span class="t" style="left:533.5px;top:318.5px;font-size:12px;color:#000;font-weight:400;transform:scaleX(0.8224)">4</span>
<span class="t" style="left:583px;top:58.5px;font-size:13px;color:#000;font-weight:400;transform:scaleX(0.9231)">開始</span>
<span class="t" style="left:669px;top:58.5px;font-size:13px;color:#000;font-weight:400;transform:scaleX(0.8767)">終了(X)</span>
<span class="t" style="left:569.5px;top:78.5px;font-size:13px;color:#0046d5;font-weight:400;transform:scaleX(0.7436)">ディスク情報</span>
<span class="t" style="left:568px;top:91.5px;font-size:13px;color:#000;font-weight:400;transform:scaleX(0.6804)">タイプ:</span>
<span class="t" style="left:568px;top:106px;font-size:12px;color:#000;font-weight:400;transform:scaleX(0.9124)">ID:</span>
<span class="t" style="left:568px;top:121px;font-size:13px;color:#000;font-weight:400;transform:scaleX(0.9114)">日付:</span>
<span class="t" style="left:568px;top:135.5px;font-size:12px;color:#000;font-weight:400;transform:scaleX(0.9479)">Label:</span>
<span class="t" style="left:617px;top:91.5px;font-size:12px;color:#0a0a82;font-weight:400;transform:scaleX(0.8955)">Data CD</span>
<span class="t" style="left:617px;top:106px;font-size:12px;color:#0a0a82;font-weight:400;transform:scaleX(0.9246)">Prodisc</span>
<span class="t" style="left:617px;top:121px;font-size:12px;color:#0a0a82;font-weight:400;transform:scaleX(0.9052)">3 April 2005</span>
<span class="t" style="left:617px;top:135.5px;font-size:12px;color:#0a0a82;font-weight:400;transform:scaleX(0.8568)">CDS_TEST_A2</span>
<span class="t" style="left:569px;top:151px;font-size:12px;color:#0046d5;font-weight:400;transform:scaleX(0.9686)">Settings</span>
<span class="t" style="left:568px;top:170.5px;font-size:13px;color:#000;font-weight:400;transform:scaleX(0.9231)">転送速度</span>
<span class="t" style="left:634.5px;top:169.5px;font-size:13px;color:#000;font-weight:400;transform:scaleX(0.9231)">最大</span>
<span class="t" style="left:568px;top:194.5px;font-size:13px;color:#000;font-weight:400;transform:scaleX(0.9231)">開始</span>
<span class="t" style="left:634px;top:193px;font-size:12px;color:#000;font-weight:400;transform:scaleX(0.8348)">00:00.00</span>
<span class="t" style="left:568px;top:216px;font-size:13px;color:#000;font-weight:400;transform:scaleX(0.9231)">終了位置</span>
<span class="t" style="left:634px;top:215.5px;font-size:12px;color:#000;font-weight:400;transform:scaleX(0.8348)">79:57.72</span>
<span class="t" style="left:584.5px;top:238.5px;font-size:12px;color:#000;font-weight:400;transform:scaleX(0.9075)">Quick Scan</span>
<span class="t" style="left:584.5px;top:257.5px;font-size:12px;color:#000;font-weight:400;transform:scaleX(0.9199)">Show C1/PIE</span>
<span class="t" style="left:584.5px;top:272.5px;font-size:12px;color:#000;font-weight:400;transform:scaleX(0.9284)">Show C2/PIF</span>
<span class="t" style="left:584.5px;top:287.5px;font-size:12px;color:#000;font-weight:400;transform:scaleX(0.9534)">Show Jitter</span>
<span class="t" style="left:584.5px;top:302.5px;font-size:12px;color:#000;font-weight:400;transform:scaleX(0.8791)">Show Read Speed</span>
<span class="t" style="left:584.5px;top:317.5px;font-size:12px;color:#000;font-weight:400;transform:scaleX(0.8869)">Show Write Speed</span>
<span class="t" style="left:568.5px;top:346px;font-size:13px;color:#000;font-weight:400;transform:scaleX(0.7650)">品質スコア:</span>
<span class="t" style="left:694px;top:346px;font-size:12px;color:#0a0a82;font-weight:400;transform:scaleX(0.8982)">92</span>
<span class="t" style="left:568.5px;top:378.5px;font-size:13px;color:#000;font-weight:400;transform:scaleX(0.8899)">進行状況:</span>
<span class="t" style="left:568.5px;top:397px;font-size:13px;color:#000;font-weight:400;transform:scaleX(0.6922)">ポジション:</span>
<span class="t" style="left:568.5px;top:415.5px;font-size:13px;color:#000;font-weight:400;transform:scaleX(0.8945)">速度:</span>
<span class="t" style="left:678px;top:378px;font-size:12px;color:#0a0a82;font-weight:400;transform:scaleX(0.8049)">100 %</span>
<span class="t" style="left:667px;top:397px;font-size:12px;color:#0a0a82;font-weight:400;transform:scaleX(0.8348)">79:55.00</span>
<span class="t" style="left:670px;top:415.5px;font-size:12px;color:#0a0a82;font-weight:400;transform:scaleX(0.8761)">40.58 X</span>
<span class="t" style="left:39.5px;top:364.5px;font-size:13px;color:#000;font-weight:400;transform:scaleX(0.6836)">CDエラー</span>
<span class="t" style="left:26.5px;top:379px;font-size:13px;color:#000;font-weight:400;transform:scaleX(0.8945)">平均:</span>
<span class="t" style="left:26.5px;top:396.5px;font-size:13px;color:#000;font-weight:400;transform:scaleX(0.8945)">最大:</span>
<span class="t" style="left:26.5px;top:414px;font-size:13px;color:#000;font-weight:400;transform:scaleX(0.8656)">合計 :</span>
<span class="t" style="left:149.5px;top:379px;font-size:12px;color:#0a0a82;font-weight:400;transform:scaleX(0.8491)">10.65</span>
<span class="t" style="left:163px;top:396.5px;font-size:12px;color:#0a0a82;font-weight:400;transform:scaleX(0.8982)">49</span>
<span class="t" style="left:145px;top:414px;font-size:12px;color:#0a0a82;font-weight:400;transform:scaleX(0.8989)">51047</span>
<span class="t" style="left:218.5px;top:364.5px;font-size:13px;color:#000;font-weight:400;transform:scaleX(0.7461)">C2エラー</span>
<span class="t" style="left:209px;top:379px;font-size:13px;color:#000;font-weight:400;transform:scaleX(0.8945)">平均:</span>
<span class="t" style="left:209px;top:396.5px;font-size:13px;color:#000;font-weight:400;transform:scaleX(0.8945)">最大:</span>
<span class="t" style="left:209px;top:414px;font-size:13px;color:#000;font-weight:400;transform:scaleX(0.8656)">合計 :</span>
<span class="t" style="left:337.5px;top:379px;font-size:12px;color:#0a0a82;font-weight:400;transform:scaleX(0.8562)">0.00</span>
<span class="t" style="left:351.5px;top:396.5px;font-size:12px;color:#0a0a82;font-weight:400;transform:scaleX(0.8972)">0</span>
<span class="t" style="left:351.5px;top:414px;font-size:12px;color:#0a0a82;font-weight:400;transform:scaleX(0.8972)">0</span>
<span class="t" style="left:401.5px;top:364.5px;font-size:12px;color:#000;font-weight:400;transform:scaleX(1.0186)">Jitter</span>
<span class="t" style="left:389px;top:379px;font-size:13px;color:#000;font-weight:400;transform:scaleX(0.8945)">平均:</span>
<span class="t" style="left:389px;top:396.5px;font-size:13px;color:#000;font-weight:400;transform:scaleX(0.8945)">最大:</span>
<span class="t" style="left:507px;top:379px;font-size:12px;color:#0a0a82;font-weight:400;transform:scaleX(0.8003)">7.59 %</span>
<span class="t" style="left:507px;top:396.5px;font-size:12px;color:#0a0a82;font-weight:400;transform:scaleX(0.8003)">10.6 %</span>
</body></html>
